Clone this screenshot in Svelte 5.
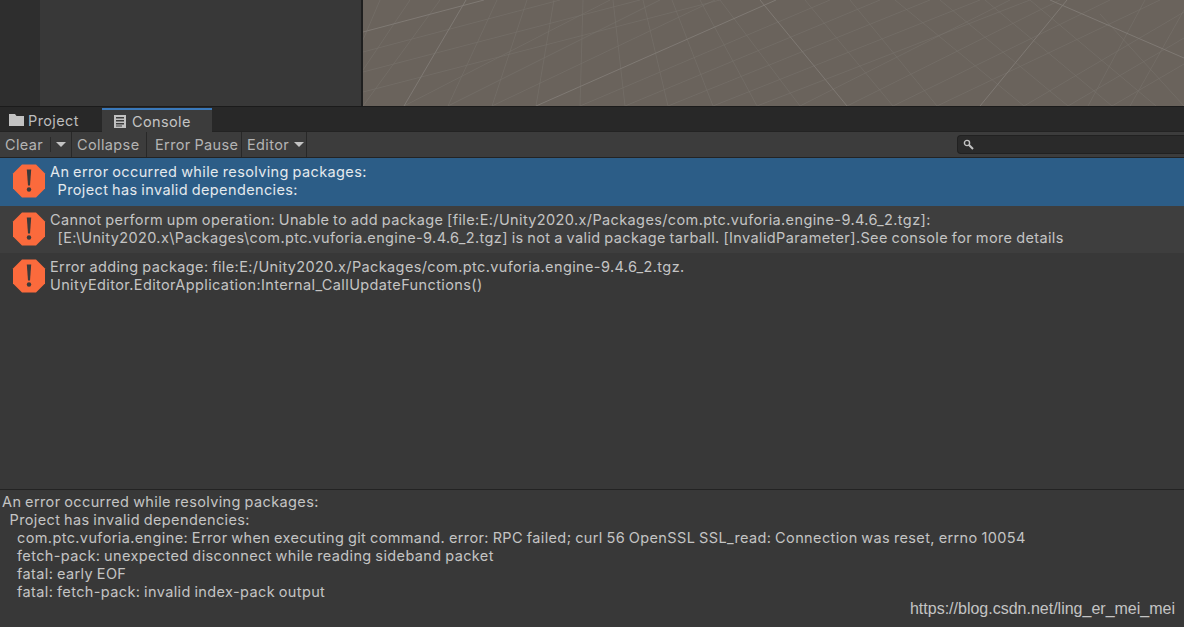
<script lang="ts">
  // scene grid, fans of lines as [x1, y1, x2, y2]
  const major = [
    [363, 32, 484, 0],
    [466, 0, 404, 106],
    [536, 106, 776, 0],
    [760, 0, 847, 106],
    [1067, 0, 980, 106],
    [1050, 0, 1184, 58]
  ]
  const minor = [
    [497, 0, 448, 106], [527, 0, 492, 106], [554, 0, 536, 106], [583, 0, 580, 106],
    [613, 0, 625, 106], [643, 0, 668, 106], [672, 0, 713, 106], [700, 0, 757, 106],
    [363, 52, 560, 0], [363, 72, 640, 0], [363, 92, 720, 0],
    [363, 106, 440, 0], [363, 70, 410, 0], [363, 40, 380, 0],
    [580, 106, 830, 0], [625, 106, 880, 0], [668, 106, 930, 0], [713, 106, 980, 0], [757, 106, 1030, 0],
    [492, 106, 715, 0], [448, 106, 660, 0], [404, 106, 610, 0],
    [800, 106, 1010, 0], [847, 106, 1060, 0], [893, 106, 1110, 0], [937, 106, 1160, 0],
    [1024, 106, 1184, 12], [1068, 106, 1184, 38], [1112, 106, 1184, 64],
    [720, 0, 800, 106], [805, 0, 893, 106], [850, 0, 937, 106], [895, 0, 1024, 106],
    [940, 0, 1068, 106], [985, 0, 1112, 106], [1030, 0, 1156, 106], [1100, 14, 1184, 106],
    [1145, 0, 1088, 106], [1184, 10, 1130, 106]
  ]

  const rows = [
    { lines: ['An error occurred while resolving packages:', '  Project has invalid dependencies:'], tone: 'selected' },
    { lines: ['Cannot perform upm operation: Unable to add package [file:E:/Unity2020.x/Packages/com.ptc.vuforia.engine-9.4.6_2.tgz]:', '  [E:\\Unity2020.x\\Packages\\com.ptc.vuforia.engine-9.4.6_2.tgz] is not a valid package tarball. [InvalidParameter].See console for more details'], tone: 'even' },
    { lines: ['Error adding package: file:E:/Unity2020.x/Packages/com.ptc.vuforia.engine-9.4.6_2.tgz.', 'UnityEditor.EditorApplication:Internal_CallUpdateFunctions()'], tone: 'odd' }
  ]

  const detail = `An error occurred while resolving packages:
  Project has invalid dependencies:
    com.ptc.vuforia.engine: Error when executing git command. error: RPC failed; curl 56 OpenSSL SSL_read: Connection was reset, errno 10054
    fetch-pack: unexpected disconnect while reading sideband packet
    fatal: early EOF
    fatal: fetch-pack: invalid index-pack output`
</script>

<div class="editor">
  <div class="top">
    <div class="gutter"></div>
    <div class="hierarchy"></div>
    <div class="scene">
      <svg viewBox="363 0 821 106" preserveAspectRatio="none">
        {#each minor as [x1, y1, x2, y2]}
          <line {x1} {y1} {x2} {y2} class="minor" />
        {/each}
        {#each major as [x1, y1, x2, y2]}
          <line {x1} {y1} {x2} {y2} class="major" />
        {/each}
      </svg>
    </div>
  </div>

  <div class="tabs">
    <div class="tab project">
      <svg width="16" height="12" viewBox="0 0 16 12"><path d="M0 0H6L7.500 2H15V12H0Z" fill="#c2c2c2" /></svg>
      Project
    </div>
    <div class="tab console">
      <svg width="12" height="13" viewBox="0 0 12 13"><path d="M0 0H12V13H0ZM2 2V3.500H10V2ZM2 5V6.500H10V5ZM2 8V9.500H10V8ZM2 10.500V11.500H8V10.500Z" fill="#c2c2c2" fill-rule="evenodd" /></svg>
      Console
    </div>
  </div>

  <div class="toolbar">
    <div class="tool clear">
      <span class="label">Clear</span>
      <span class="caret-box"><i class="caret"></i></span>
    </div>
    <div class="tool collapse">Collapse</div>
    <div class="tool pause">Error Pause</div>
    <div class="tool dropdown">Editor <i class="caret"></i></div>
    <div class="search">
      <svg width="11" height="11" viewBox="0 0 11 11"><circle cx="4" cy="4" r="2.600" fill="none" stroke="#c4c4c4" stroke-width="1.400" /><path d="M6 6L10 10" stroke="#c4c4c4" stroke-width="2" /></svg>
    </div>
  </div>

  <div class="list">
    {#each rows as row}
      <div class="row {row.tone}">
        <svg class="error-icon" width="34" height="34" viewBox="0 0 34 34">
          <path d="M10 0.500H24L33 9.500V24.500L24 33.500H10L1 24.500V9.500Z" fill="#fb6a3c" />
          <path d="M14.800 5.500H19.200L18 21.500H16Z" fill="#3a3a3a" />
          <circle cx="17" cy="25.500" r="2.200" fill="#3a3a3a" />
        </svg>
        <div class="msg">
          {#each row.lines as line}
            <div class="line">{line}</div>
          {/each}
        </div>
      </div>
    {/each}
  </div>

  <div class="detail">
    <pre>{detail}</pre>
    <span class="watermark">https://blog.csdn.net/ling_er_mei_mei</span>
  </div>
</div>

<style>
  :global(body) {
    margin: 0;
    background: #383838;
    overflow: hidden;
  }

  .editor {
    width: 1184px;
    height: 627px;
    display: flex;
    flex-direction: column;
    font-family: Inter, "Liberation Sans", sans-serif;
    font-size: 14.500px;
    letter-spacing: 0.38px;
    word-spacing: -0.7px;
    color: #c4c4c4;
    overflow: hidden;
  }

  .top {
    height: 106px;
    display: flex;
    flex: none;
  }

  .gutter {
    width: 40px;
    background: #2e2e2e;
  }

  .hierarchy {
    width: 321px;
    background: #383838;
  }

  .scene {
    flex: 1;
    background: #6a635c;
    border-left: 2px solid #1f1f1f;
  }

  .scene svg {
    display: block;
    width: 100%;
    height: 100%;
  }

  .minor {
    stroke: #78736d;
    stroke-width: 0.800;
    opacity: 0.7;
  }

  .major {
    stroke: #817c76;
    stroke-width: 0.900;
  }

  .tabs {
    height: 26px;
    flex: none;
    box-sizing: border-box;
    display: flex;
    background: #282828;
    border-top: 1px solid #1b1b1b;
    border-bottom: 1px solid #232323;
  }

  .tab {
    display: flex;
    align-items: center;
    gap: 3px;
    box-sizing: border-box;
  }

  .project {
    width: 102px;
    padding: 2px 0 0 9px;
    color: #bdbdbd;
  }

  .console {
    width: 110px;
    padding-left: 12px;
    gap: 6px;
    background: #3c3c3c;
    border-top: 2px solid #3a79bb;
    margin-top: 1px;
    margin-bottom: -1px;
  }

  .toolbar {
    height: 25px;
    flex: none;
    display: flex;
    align-items: stretch;
    background: #3c3c3c;
    border-bottom: 1px solid #232323;
    color: #b4b4b4;
  }

  .tool {
    display: flex;
    align-items: center;
    box-sizing: border-box;
    border-right: 1px solid #282828;
    white-space: nowrap;
  }

  .clear {
    width: 72px;
    padding-left: 5px;
  }

  .clear .label {
    width: 45px;
    border-right: 1px solid #2a2a2a;
    line-height: 15px;
  }

  .caret-box {
    flex: 1;
    display: flex;
    justify-content: center;
  }

  .caret {
    display: inline-block;
    width: 0;
    height: 0;
    border-left: 5px solid transparent;
    border-right: 5px solid transparent;
    border-top: 5px solid #c4c4c4;
  }

  .collapse {
    width: 75px;
    padding-left: 5px;
  }

  .pause {
    width: 95px;
    padding-left: 8px;
  }

  .dropdown {
    width: 65px;
    padding-left: 5px;
    gap: 5px;
  }

  .search {
    margin: 3px 0 3px auto;
    width: 227px;
    box-sizing: border-box;
    background: #2a2a2a;
    border: 1px solid #212121;
    border-right: none;
    border-radius: 4px 0 0 4px;
    display: flex;
    align-items: center;
    padding-left: 5px;
  }

  .list {
    height: 331px;
    flex: none;
    background: #383838;
  }

  .row {
    height: 48px;
    box-sizing: border-box;
    display: flex;
    align-items: center;
    padding: 0 0 2px 12px;
    gap: 4px;
  }

  .row.selected {
    background: #2c5d87;
    color: #e4e9ed;
  }

  .row.even {
    height: 47px;
    padding-bottom: 1px;
    background: #3e3e3e;
  }

  .row.odd {
    background: #383838;
  }

  .error-icon {
    flex: none;
  }

  .line {
    line-height: 18px;
    white-space: pre;
  }

  .detail {
    flex: 1;
    position: relative;
    background: #383838;
    border-top: 1px solid #232323;
    padding: 3px 2px 0;
  }

  pre {
    margin: 0;
    font: inherit;
    letter-spacing: inherit;
    word-spacing: inherit;
    line-height: 18px;
    color: #c4c4c4;
  }

  .watermark {
    position: absolute;
    right: 9px;
    bottom: 9px;
    font-family: "Liberation Sans", sans-serif;
    font-size: 16px;
    letter-spacing: 0;
    word-spacing: 0;
    color: #c4c4c4;
  }
</style>
